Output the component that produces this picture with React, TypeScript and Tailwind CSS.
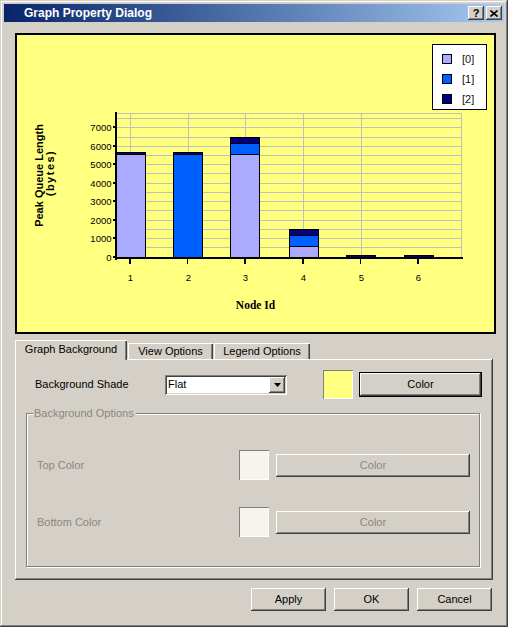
import { ReactNode } from "react";

// classic 3D edges
const raised =
  "shadow-[inset_-1px_-1px_0_#404040,inset_1px_1px_0_#fff,inset_-2px_-2px_0_#808080]";
const sunken =
  "shadow-[inset_1px_1px_0_#808080,inset_-1px_-1px_0_#fff,inset_2px_2px_0_#404040,inset_-2px_-2px_0_#d4d0c8]";
const swatchEdge = "shadow-[inset_1px_1px_0_#808080,inset_-1px_-1px_0_#fff]";

type BtnProps = {
  children: ReactNode;
  className?: string;
  disabled?: boolean;
};

function Btn({ children, className = "", disabled = false }: BtnProps) {
  return (
    <div
      className={`flex items-center justify-center bg-[#d4d0c8] ${raised} ${
        disabled ? "text-[#8a8782]" : "text-black"
      } ${className}`}
    >
      {children}
    </div>
  );
}

function CaptionBtn({ children, className = "" }: { children: ReactNode; className?: string }) {
  return (
    <div
      className={`flex h-[14px] w-[16px] items-center justify-center bg-[#d4d0c8] ${raised} ${className}`}
    >
      {children}
    </div>
  );
}

// chart scale: 0 at y=256.5, 500 per ~9.23px
const S = 0.018457;
const yOf = (v: number) => 256.5 - v * S;

const COLORS = ["#aaaaff", "#0060ff", "#000080"];
const cats = [130, 188, 245, 303, 361, 418];
const gridXs = [130, 188, 245, 303, 361, 461];
const bars = [
  { x: 116, v: [5550, 0, 110] },
  { x: 173, v: [0, 5550, 110] },
  { x: 230, v: [5550, 580, 340] },
  { x: 289, v: [550, 600, 340] },
  { x: 346, v: [0, 0, 100] },
  { x: 404, v: [0, 0, 100] },
];

function Chart() {
  const gridYs = Array.from({ length: 15 }, (_, i) => Math.round(yOf((i + 1) * 500)));
  const ticks = [0, 1000, 2000, 3000, 4000, 5000, 6000, 7000];

  return (
    <svg width={477} height={297} viewBox="17 35 477 297" className="block">
      {/* grid */}
      <g stroke="#c0c0c0" strokeWidth={1} shapeRendering="crispEdges">
        <line x1={117} x2={461} y1={113.5} y2={113.5} />
        {gridYs.map((gy) => (
          <line key={gy} x1={117} x2={461} y1={gy + 0.5} y2={gy + 0.5} />
        ))}
        {gridXs.map((gx) => (
          <line key={gx} x1={gx + 0.5} x2={gx + 0.5} y1={113} y2={257} />
        ))}
      </g>

      {/* bars */}
      <g stroke="black" strokeWidth={1} shapeRendering="crispEdges">
        {bars.map((b) => {
          let cum = 0;
          return b.v.map((v, i) => {
            if (v === 0) return null;
            const bottom = Math.round(yOf(cum));
            cum += v;
            const top = Math.round(yOf(cum));
            return (
              <rect
                key={`${b.x}-${i}`}
                x={b.x + 0.5}
                y={top + 0.5}
                width={29}
                height={Math.max(bottom - top, 1)}
                fill={COLORS[i]}
              />
            );
          });
        })}
      </g>

      {/* axes */}
      <rect x={115} y={112} width={2} height={148} fill="black" />
      <rect x={115} y={257} width={348} height={2} fill="black" />
      {cats.map((cx, i) => (
        <rect key={cx} x={cx - 1} y={259} width={i === 1 || i === 4 ? 1 : 2} height={5} fill="black" />
      ))}
      {ticks.map((t) => {
        const ty = Math.round(yOf(t));
        return (
          <g key={t}>
            <rect x={113} y={ty - 1} width={2} height={2} fill="black" />
            <text
              x={111.5}
              y={ty + 3.5}
              textAnchor="end"
              fontSize={9.5}
              fontFamily="'Liberation Sans', Arial, sans-serif"
              fill="black"
            >
              {t}
            </text>
          </g>
        );
      })}
      {cats.map((cx, i) => (
        <text
          key={cx}
          x={cx + 0.5}
          y={280.5}
          textAnchor="middle"
          fontSize={9.5}
          fontFamily="'Liberation Sans', Arial, sans-serif"
          fill="black"
        >
          {i + 1}
        </text>
      ))}

      {/* axis titles */}
      <text
        transform="translate(43,175.5) rotate(-90)"
        textAnchor="middle"
        fontSize={11}
        fontWeight="bold"
        fontFamily="'Liberation Sans', Arial, sans-serif"
        fill="black"
      >
        Peak Queue Length
      </text>
      <text
        transform="translate(54,173) rotate(-90)"
        textAnchor="middle"
        fontSize={11}
        fontWeight="bold"
        letterSpacing={1.5}
        fontFamily="'Liberation Sans', Arial, sans-serif"
        fill="black"
      >
        (bytes)
      </text>
      <text
        x={255.5}
        y={308.5}
        textAnchor="middle"
        fontSize={11.5}
        fontWeight="bold"
        fontFamily="'Liberation Serif', 'Times New Roman', serif"
        fill="black"
      >
        Node Id
      </text>

      {/* legend */}
      <rect x={432.5} y={44.5} width={54} height={65} fill="white" stroke="black" shapeRendering="crispEdges" />
      {COLORS.map((c, i) => (
        <g key={c}>
          <rect
            x={442.5}
            y={54.5 + i * 20}
            width={9}
            height={9}
            fill={c}
            stroke="black"
            shapeRendering="crispEdges"
          />
          <text
            x={462}
            y={63 + i * 20}
            fontSize={11}
            fontFamily="'Liberation Sans', Arial, sans-serif"
            fill="#101010"
          >
            [{i}]
          </text>
        </g>
      ))}
    </svg>
  );
}

export default function App() {
  return (
    <div className="relative flex h-[627px] w-[508px] flex-col bg-[#d4d0c8] p-[4px] font-['Liberation_Sans',Arial,sans-serif] text-[11px] text-black shadow-[inset_-1px_-1px_0_#404040,inset_1px_1px_0_#d4d0c8,inset_-2px_-2px_0_#808080,inset_2px_2px_0_#fff]">
      {/* title bar */}
      <div className="flex h-[18px] items-center bg-linear-to-r from-[#0a246a] to-[#a6caf0] pl-[20px] pr-[2px]">
        <span className="flex-1 text-[12px] font-bold leading-none text-white">Graph Property Dialog</span>
        <CaptionBtn>
          <span className="text-[11px] font-bold leading-none text-black">?</span>
        </CaptionBtn>
        <CaptionBtn className="ml-[2px]">
          <svg width={8} height={7} viewBox="0 0 8 7">
            <path d="M0.5 0.5 L7.5 6.5 M7.5 0.5 L0.5 6.5" stroke="black" strokeWidth={1.6} fill="none" />
          </svg>
        </CaptionBtn>
      </div>

      {/* chart */}
      <div className="ml-[11px] mt-[11px] h-[301px] w-[481px] border-2 border-black bg-[#ffff80]">
        <Chart />
      </div>

      {/* tabs */}
      <div className="ml-[11px] mt-[6px] w-[478px]">
        <div className="flex h-[19px] items-end">
          <div className="relative z-10 -mb-px flex h-[20px] w-[112px] items-center justify-center bg-[#d4d0c8] pb-[2px] shadow-[inset_1px_1px_0_#fff,inset_-1px_0_0_#404040,inset_-2px_0_0_#808080]">
            Graph Background
          </div>
          <div className="ml-px flex h-[16px] w-[85px] items-center justify-center shadow-[inset_1px_1px_0_#fff,inset_-1px_0_0_#404040,inset_-2px_0_0_#808080]">
            View Options
          </div>
          <div className="ml-px flex h-[16px] w-[96px] items-center justify-center shadow-[inset_1px_1px_0_#fff,inset_-1px_0_0_#404040,inset_-2px_0_0_#808080]">
            Legend Options
          </div>
        </div>

        <div className="flex h-[221px] flex-col bg-[#d4d0c8] shadow-[inset_-1px_-1px_0_#404040,inset_1px_1px_0_#fff,inset_-2px_-2px_0_#808080]">
          <div className="mt-[11px] flex h-[29px] items-center">
            <span className="ml-[20px] w-[130px]">Background Shade</span>
            <div className={`flex h-[20px] w-[122px] items-center bg-white pl-[3px] pr-[2px] ${sunken}`}>
              <span className="flex-1">Flat</span>
              <div className={`flex h-[16px] w-[16px] items-center justify-center bg-[#d4d0c8] ${raised}`}>
                <svg width={7} height={4} viewBox="0 0 7 4">
                  <path d="M0 0 H7 L3.5 4 Z" fill="black" />
                </svg>
              </div>
            </div>
            <div className={`ml-[36px] h-[29px] w-[30px] bg-[#ffff80] ${swatchEdge}`} />
            <Btn className="ml-[6px] h-[25px] w-[123px] border border-black">Color</Btn>
          </div>

          <div className="relative ml-[11px] mt-[14px] h-[154px] w-[454px] border border-[#808080] shadow-[1px_1px_0_#fff,inset_1px_1px_0_#fff]">
            <span className="absolute -top-[7px] left-[6px] bg-[#d4d0c8] pl-px pr-[2px] leading-[13px] text-[#8a8782]">
              Background Options
            </span>
            <div className="mt-[36px] flex h-[30px] items-center">
              <span className="ml-[10px] w-[202px] text-[#8a8782]">Top Color</span>
              <div className={`h-[30px] w-[30px] bg-[#f6f4ef] ${swatchEdge}`} />
              <Btn disabled className="ml-[7px] h-[23px] w-[194px]">
                Color
              </Btn>
            </div>
            <div className="mt-[27px] flex h-[30px] items-center">
              <span className="ml-[10px] w-[202px] text-[#8a8782]">Bottom Color</span>
              <div className={`h-[30px] w-[30px] bg-[#f6f4ef] ${swatchEdge}`} />
              <Btn disabled className="ml-[7px] h-[23px] w-[194px]">
                Color
              </Btn>
            </div>
          </div>
        </div>
      </div>

      {/* dialog buttons */}
      <div className="mt-[8px] flex justify-end gap-[8px] pr-[12px]">
        <Btn className="h-[23px] w-[75px]">Apply</Btn>
        <Btn className="h-[23px] w-[75px]">OK</Btn>
        <Btn className="h-[23px] w-[75px]">Cancel</Btn>
      </div>
    </div>
  );
}
